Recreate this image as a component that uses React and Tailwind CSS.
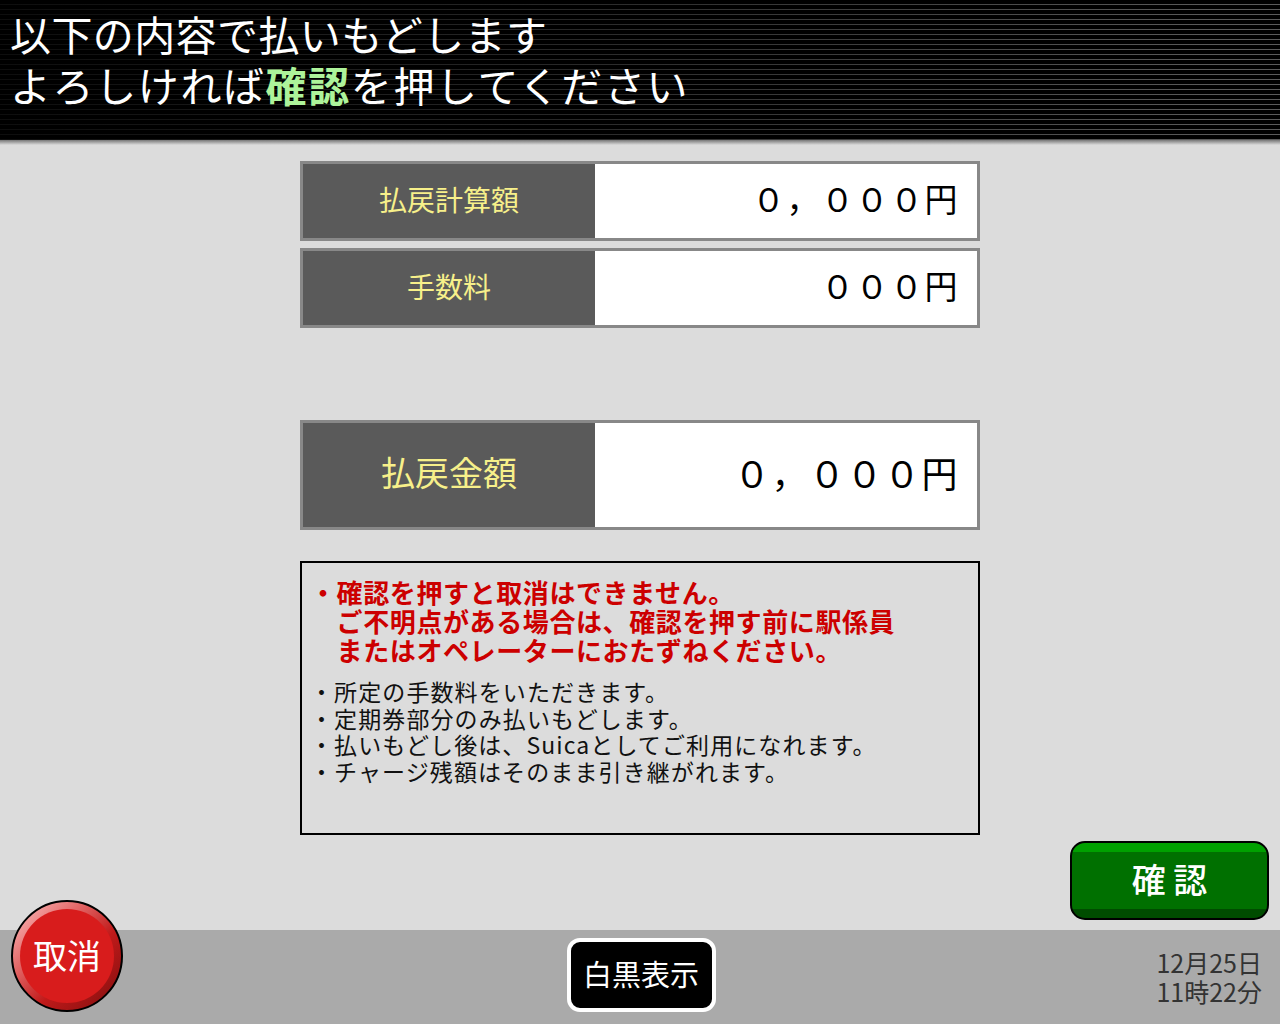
import React from 'react';

const jp = { fontFamily: '"Noto Sans CJK JP", "Noto Sans", sans-serif' };

function AmountRow({ label, value, big }) {
  return (
    <div className={`flex w-[680px] border-[3px] border-[#888888] ${big ? 'h-[110px]' : 'h-[80px]'}`}>
      <div
        className={`flex w-[292px] items-center justify-center bg-[#5a5a5a] text-[#f7f08a] ${big ? 'pb-[7px] text-[34px]' : 'pb-[5px] text-[28px]'}`}
      >
        {label}
      </div>
      <div
        className={`flex flex-1 items-center justify-end bg-white pr-[18px] text-black ${big ? 'pb-[7px] text-[36px] tracking-[1.5px]' : 'pb-[5px] text-[33px] tracking-[1.5px]'}`}
      >
        {value}
      </div>
    </div>
  );
}

export default function App() {
  return (
    <div className="relative flex h-[1024px] w-[1280px] flex-col overflow-hidden bg-[#dcdcdc]" style={jp}>
      {/* header */}
      <header className="h-[140px] bg-[image:linear-gradient(to_right,rgba(0,0,0,0.85),rgba(0,0,0,0.55)_45%,rgba(0,0,0,0)_95%),repeating-linear-gradient(to_bottom,#000_0px,#000_4px,#5a5a5a_4px,#5a5a5a_5px)] pl-[10px] pt-[8px] text-[41px] leading-[51px] text-white">
        <div className="tracking-[0.4px]">以下の内容で払いもどします</div>
        <div className="tracking-[1.6px]">
          よろしければ<span className="font-bold text-[#adf39a]">確認</span>を押してください
        </div>
      </header>
      <div className="h-[5px] bg-[linear-gradient(to_bottom,#777777,#dcdcdc)]" />

      {/* main */}
      <main className="flex flex-1 flex-col items-center">
        <div className="mt-[16px]">
          <AmountRow label="払戻計算額" value="０，０００円" />
        </div>
        <div className="mt-[7px]">
          <AmountRow label="手数料" value="０００円" />
        </div>
        <div className="mt-[92px]">
          <AmountRow label="払戻金額" value="０，０００円" big />
        </div>

        <div className="mt-[31px] h-[274px] w-[680px] border-2 border-black bg-[#dcdcdc] pl-[8px] pt-[14px]">
          <div className="flex text-[26px] font-bold leading-[29px] tracking-[0.6px] text-[#cc0000]">
            <span>・</span>
            <div>
              <div>確認を押すと取消はできません。</div>
              <div>ご不明点がある場合は、確認を押す前に駅係員</div>
              <div>またはオペレーターにおたずねください。</div>
            </div>
          </div>
          <ul className="mt-[14px] text-[23px] leading-[26.5px] tracking-[1.1px] text-[#111111]">
            <li>・所定の手数料をいただきます。</li>
            <li>・定期券部分のみ払いもどします。</li>
            <li>・払いもどし後は、Suicaとしてご利用になれます。</li>
            <li>・チャージ残額はそのまま引き継がれます。</li>
          </ul>
        </div>

        <div className="mt-[6px] flex w-full justify-end pr-[11px]">
          <button className="flex h-[79px] w-[199px] items-center justify-center rounded-[15px] border-2 border-black bg-[linear-gradient(to_bottom,#00a000_0px,#00a000_9px,#007000_9px,#007000_66px,#004c00_66px)] pb-[4px] text-[34px] font-medium text-white">
            確 認
          </button>
        </div>
      </main>

      {/* footer */}
      <footer className="flex h-[94px] items-start bg-[#aaaaaa]">
        <div className="flex flex-1 justify-center pl-[2px] pt-[8px]">
          <button className="flex h-[74px] w-[149px] items-center justify-center rounded-[13px] border-4 border-white bg-black pb-[3px] text-[29px] text-white">
            白黒表示
          </button>
        </div>
        <div className="absolute bottom-[18px] right-[18px] text-right text-[25px] leading-[29px] text-[#333333]">
          <div>12月25日</div>
          <div>11時22分</div>
        </div>
      </footer>

      {/* cancel button */}
      <button className="absolute left-[11px] top-[900px] h-[112px] w-[112px] rounded-full border-2 border-black bg-[linear-gradient(135deg,#ffc4c4_0%,#e06060_35%,#c01a1a_60%,#7e0e0e_100%)] p-[7px]">
        <span className="flex h-full w-full items-center justify-center rounded-full bg-[#d81c1c] pb-[3px] text-[34px] text-white">
          取消
        </span>
      </button>
    </div>
  );
}
